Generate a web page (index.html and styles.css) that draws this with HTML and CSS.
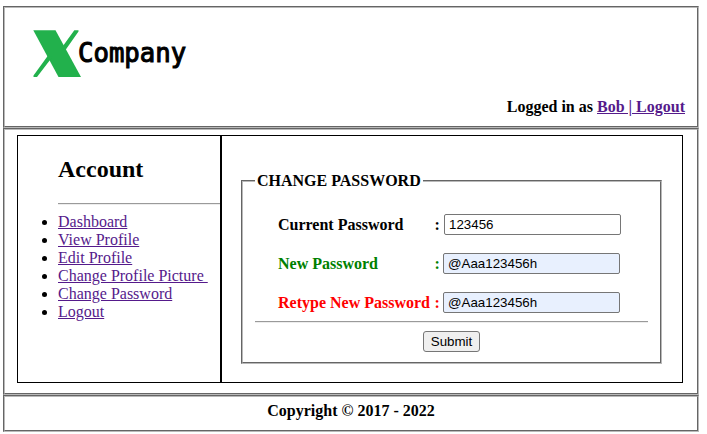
FILE: index.html
```html
<!DOCTYPE html>
<html lang="en">
<head>
<meta charset="utf-8">
<title>Change Password</title>
<link rel="stylesheet" href="styles.css">
</head>
<body>
<header class="panel header">
  <div class="logo">
    <svg class="mark" width="49" height="48" viewBox="0 0 49 48" fill="#22b14c" aria-hidden="true">
      <path d="M.3.3H22.5L48 47H25.5Z"/>
      <path d="M41.3.3H45.5V1.5L32.5 20L28 18L30.5 15.2Z"/>
      <path d="M.5 47V45.5L15 25.5L20 27L17 30L4 47Z"/>
    </svg>
    <span class="wordmark">Company</span>
  </div>
  <div class="session">Logged in as <a href="#">Bob | Logout</a></div>
</header>
<main class="panel main">
  <nav class="account">
    <h2>Account</h2>
    <hr>
    <ul>
      <li><a href="#">Dashboard</a></li>
      <li><a href="#">View Profile</a></li>
      <li><a href="#">Edit Profile</a></li>
      <li><a href="#">Change Profile Picture&nbsp;</a></li>
      <li><a href="#">Change Password</a></li>
      <li><a href="#">Logout</a></li>
    </ul>
  </nav>
  <section class="content">
    <form class="form">
      <fieldset>
        <legend>CHANGE PASSWORD</legend>
        <label class="row"><span class="name">Current Password</span><span class="colon wide">:</span><input type="text" value="123456"></label>
        <label class="row new"><span class="name">New Password</span><span class="colon">:</span><input class="filled" type="text" value="@Aaa123456h"></label>
        <label class="row retype"><span class="name">Retype New Password</span><span class="colon">:</span><input class="filled" type="text" value="@Aaa123456h"></label>
        <hr>
        <div class="actions"><button type="button">Submit</button></div>
      </fieldset>
    </form>
  </section>
</main>
<footer class="panel footer">Copyright © 2017 - 2022</footer>
</body>
</html>
```
FILE: styles.css
```css
* { box-sizing: border-box; }
body {
  margin: 6px 8px 0 3px;
  background: #fff;
  color: #000;
  font: 16px/18px "Liberation Serif", "Times New Roman", serif;
}
a { color: #551a8b; text-decoration: underline; }
.panel, fieldset { border: 2px groove #b9b9b9; }
.panel { width: 696px; }
.header {
  height: 122px;
  padding: 21px 12px 0 28px;
  font-weight: bold;
}
.logo { display: flex; height: 69px; }
.mark { display: block; flex: none; margin-top: 1px; }
.wordmark {
  margin: 14px 0 0 -4px;
  font: 27px/20px "DejaVu Sans Mono", monospace;
  -webkit-text-stroke: 1.1px #000;
  transform: scaleX(.95);
  transform-origin: left;
}
.session { text-align: right; }
.main {
  height: 267px;
  padding: 5px 14px 10px 12px;
  display: grid;
  grid-template-columns: 204px 1fr;
}
.account { border: 1px solid #000; padding-left: 40px; }
h2 { margin: 20px 0 0; font-size: 24px; line-height: 27px; }
hr { height: 2px; margin: 0; border: 0; border-top: 1px solid #9a9a9a; background: #ededed; }
.account hr { margin-top: 20px; }
ul { margin: 8px 0 0; padding: 0; }
.content { border: 1px solid #000; padding: 36px 20px 0 19px; font-weight: bold; }
fieldset { margin: 0; padding: 0 12px; height: 192px; min-width: 0; }
legend { padding: 0 2px; height: 18px; }
.row { display: flex; align-items: center; height: 21px; margin: 24px 0 0 23px; }
.row + .row { margin-top: 18px; }
.name { width: 156.5px; white-space: nowrap; }
.colon { width: 8.5px; }
.colon.wide { width: 9.5px; }
.new { color: #008000; }
.retype { color: #f00; }
input {
  width: 177px; height: 21px; margin: 0; padding: 1px 4px;
  border: 1px solid #767676; border-radius: 2px;
  background: #fff; color: #000;
  font: 13.333px "Liberation Sans", Arial, sans-serif;
}
.filled { background: #e8f0fe; }
.content hr { margin-top: 8px; }
.actions { display: flex; justify-content: center; margin-top: 8px; }
button {
  width: 57px; height: 21px; padding: 0;
  border: 1px solid #767676; border-radius: 3px;
  background: #efefef; color: #000;
  font: 13.333px "Liberation Sans", Arial, sans-serif;
}
.footer { height: 37px; padding-top: 5px; text-align: center; font-weight: bold; }
```
